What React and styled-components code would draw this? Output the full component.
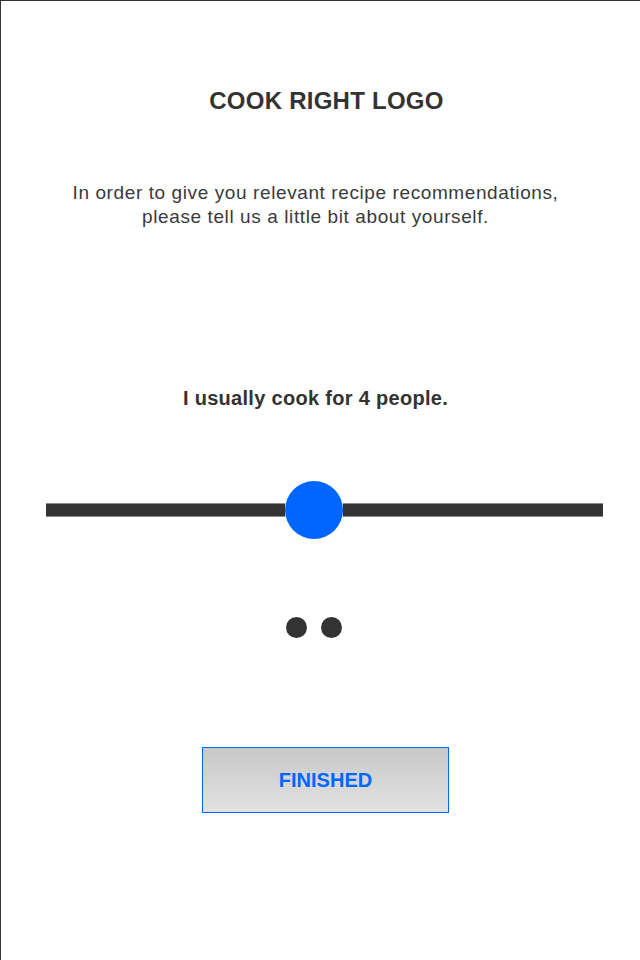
import React from "react";
import styled, { createGlobalStyle } from "styled-components";

const GlobalStyle = createGlobalStyle`
  html, body {
    margin: 0;
    padding: 0;
    background: #ffffff;
  }
  body {
    font-family: "Liberation Sans", Arial, Helvetica, sans-serif;
  }
`;

const Page = styled.div`
  width: 640px;
  height: 960px;
  box-sizing: border-box;
  border-top: 1px solid #333333;
  border-left: 1px solid #333333;
  background: #ffffff;
  display: flex;
  flex-direction: column;
  align-items: center;
  overflow: hidden;
`;

const shift = ({ $shift = 0 }) =>
  $shift >= 0 ? `margin-left: ${$shift * 2}px;` : `margin-right: ${-$shift * 2}px;`;

const Title = styled.h1`
  margin: 86px 0 0 0;
  font-size: 24px;
  line-height: 28px;
  letter-spacing: 0.25px;
  font-weight: 700;
  color: #333333;
  white-space: nowrap;
  ${shift}
`;

const Intro = styled.p`
  margin-top: 66px;
  margin-bottom: 0;
  font-size: 19px;
  line-height: 24px;
  letter-spacing: 0.6px;
  font-weight: 400;
  color: #3a3a3a;
  text-align: center;
  white-space: nowrap;
  ${shift}
`;

const Question = styled.p`
  margin-top: 157px;
  margin-bottom: 0;
  font-size: 20px;
  line-height: 24px;
  letter-spacing: 0.3px;
  font-weight: 700;
  color: #333333;
  white-space: nowrap;
  ${shift}
`;

const SliderRow = styled.div`
  margin-top: 71px;
  width: 557px;
  height: 58px;
  display: flex;
  align-items: center;
  ${shift}
`;

const TrackSegment = styled.div`
  flex: ${({ $grow }) => $grow} 1 0;
  height: 14px;
  box-sizing: border-box;
  background: #333333;
  border-top: 1px solid #8c8c8c;
  border-bottom: 1px solid #8c8c8c;
`;

const Knob = styled.div`
  flex: 0 0 58px;
  height: 58px;
  border-radius: 50%;
  background: #0066ff;
`;

const Dots = styled.div`
  margin-top: 78px;
  display: flex;
  gap: 14px;
  ${shift}
`;

const Dot = styled.span`
  width: 21px;
  height: 21px;
  border-radius: 50%;
  background: #333333;
`;

const FinishButton = styled.button`
  margin-top: 109px;
  width: 247px;
  height: 66px;
  box-sizing: border-box;
  border: 1px solid #0066ff;
  border-radius: 0;
  background: linear-gradient(to bottom, #c8c8c8 0%, #e2e2e2 100%);
  color: #0066ff;
  font-family: "Liberation Sans", Arial, Helvetica, sans-serif;
  font-size: 20px;
  font-weight: 700;
  padding: 0;
  cursor: pointer;
  ${shift}
`;

export default function App() {
  const value = 4;
  const min = 1;
  const max = 8;
  const left = 239;
  const right = 260;
  return (
    <>
      <GlobalStyle />
      <Page>
        <Title $shift={6}>COOK RIGHT LOGO</Title>
        <Intro $shift={-5}>
          In order to give you relevant recipe recommendations,
          <br />
          please tell us a little bit about yourself.
        </Intro>
        <Question $shift={-5}>I usually cook for {value} people.</Question>
        <SliderRow
          $shift={4}
          role="slider"
          aria-valuemin={min}
          aria-valuemax={max}
          aria-valuenow={value}
        >
          <TrackSegment $grow={left} />
          <Knob />
          <TrackSegment $grow={right} />
        </SliderRow>
        <Dots $shift={-6.5}>
          <Dot />
          <Dot />
        </Dots>
        <FinishButton $shift={5}>FINISHED</FinishButton>
      </Page>
    </>
  );
}
